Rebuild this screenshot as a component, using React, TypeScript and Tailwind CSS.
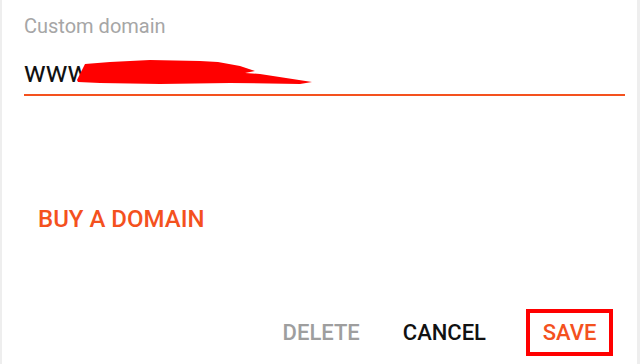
import React from 'react'

const font = {fontFamily: 'Roboto, "Noto Sans", sans-serif'}

export default function App() {
	return (
		<div className='flex w-[640px] h-[364px] bg-white' style={font}>
			<div className='w-[2px] bg-[#eeeeee]' />
			<div className='flex-1 flex flex-col pl-[22px] pr-[12px]'>
				<div className='pt-[14px] text-[20px] leading-[24px] text-[#a6a6a6]'>Custom domain</div>
				<div className='relative mt-[18px] h-[32px] text-[29px] leading-[32px] text-[#111111]'>
					www
					<svg className='absolute left-[53px] top-[3px]' width='240' height='28' viewBox='0 0 240 28'>
						<polygon
							fill='#ff0000'
							points='0,21 8,5 33,3 73,1 123,2 141,3 163,7 178,12 168,14 183,15 235,23 223,25 153,24 83,25 23,24 1,23'
						/>
					</svg>
				</div>
				<div className='mt-[6px] h-[2px] bg-[#f4511e]' />
				<div className='mt-[109px] pl-[14px] text-[24px] leading-[28px] font-medium text-[#f4511e]'>BUY A DOMAIN</div>
				<div className='mt-[76px] flex items-center justify-end pr-[12px]'>
					<button className='text-[22px] leading-[26px] font-medium text-[#9e9e9e]'>DELETE</button>
					<button className='ml-[43px] text-[22px] leading-[26px] font-medium text-[#111111]'>CANCEL</button>
					<div className='ml-[40px] border-[4px] border-[#ff0000] h-[47px] w-[87px] flex items-center justify-center'>
						<button className='text-[22px] leading-[26px] font-medium text-[#f4511e]'>SAVE</button>
					</div>
				</div>
			</div>
			<div className='w-[3px] bg-[#eeeeee]' />
		</div>
	)
}
